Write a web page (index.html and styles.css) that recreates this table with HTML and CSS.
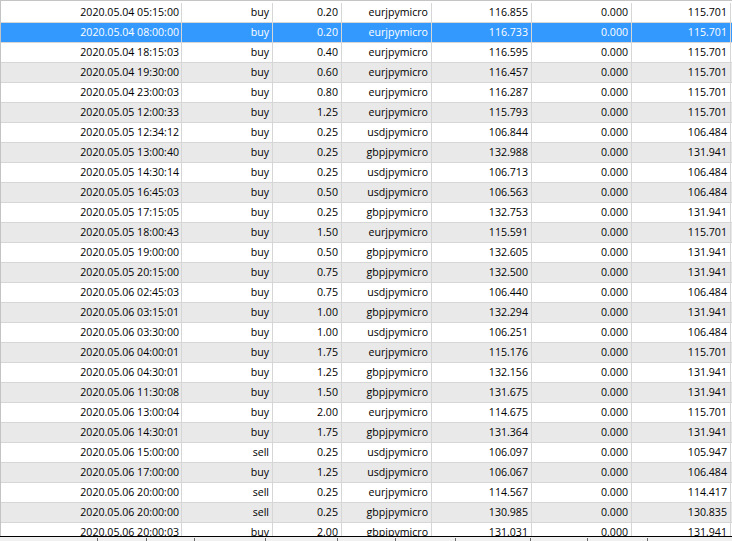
FILE: index.html
```html
<!DOCTYPE html>
<html>
<head>
<meta charset="utf-8">
<link rel="stylesheet" href="styles.css">
</head>
<body>
<div class="view">
  <div class="grid">
    <div class="row"><span>2020.05.04 05:15:00</span><span>buy</span><span>0.20</span><span>eurjpymicro</span><span>116.855</span><span>0.000</span><span>115.701</span></div>
    <div class="row sel"><span>2020.05.04 08:00:00</span><span>buy</span><span>0.20</span><span>eurjpymicro</span><span>116.733</span><span>0.000</span><span>115.701</span></div>
    <div class="row"><span>2020.05.04 18:15:03</span><span>buy</span><span>0.40</span><span>eurjpymicro</span><span>116.595</span><span>0.000</span><span>115.701</span></div>
    <div class="row alt"><span>2020.05.04 19:30:00</span><span>buy</span><span>0.60</span><span>eurjpymicro</span><span>116.457</span><span>0.000</span><span>115.701</span></div>
    <div class="row"><span>2020.05.04 23:00:03</span><span>buy</span><span>0.80</span><span>eurjpymicro</span><span>116.287</span><span>0.000</span><span>115.701</span></div>
    <div class="row alt"><span>2020.05.05 12:00:33</span><span>buy</span><span>1.25</span><span>eurjpymicro</span><span>115.793</span><span>0.000</span><span>115.701</span></div>
    <div class="row"><span>2020.05.05 12:34:12</span><span>buy</span><span>0.25</span><span>usdjpymicro</span><span>106.844</span><span>0.000</span><span>106.484</span></div>
    <div class="row alt"><span>2020.05.05 13:00:40</span><span>buy</span><span>0.25</span><span>gbpjpymicro</span><span>132.988</span><span>0.000</span><span>131.941</span></div>
    <div class="row"><span>2020.05.05 14:30:14</span><span>buy</span><span>0.25</span><span>usdjpymicro</span><span>106.713</span><span>0.000</span><span>106.484</span></div>
    <div class="row alt"><span>2020.05.05 16:45:03</span><span>buy</span><span>0.50</span><span>usdjpymicro</span><span>106.563</span><span>0.000</span><span>106.484</span></div>
    <div class="row"><span>2020.05.05 17:15:05</span><span>buy</span><span>0.25</span><span>gbpjpymicro</span><span>132.753</span><span>0.000</span><span>131.941</span></div>
    <div class="row alt"><span>2020.05.05 18:00:43</span><span>buy</span><span>1.50</span><span>eurjpymicro</span><span>115.591</span><span>0.000</span><span>115.701</span></div>
    <div class="row"><span>2020.05.05 19:00:00</span><span>buy</span><span>0.50</span><span>gbpjpymicro</span><span>132.605</span><span>0.000</span><span>131.941</span></div>
    <div class="row alt"><span>2020.05.05 20:15:00</span><span>buy</span><span>0.75</span><span>gbpjpymicro</span><span>132.500</span><span>0.000</span><span>131.941</span></div>
    <div class="row"><span>2020.05.06 02:45:03</span><span>buy</span><span>0.75</span><span>usdjpymicro</span><span>106.440</span><span>0.000</span><span>106.484</span></div>
    <div class="row alt"><span>2020.05.06 03:15:01</span><span>buy</span><span>1.00</span><span>gbpjpymicro</span><span>132.294</span><span>0.000</span><span>131.941</span></div>
    <div class="row"><span>2020.05.06 03:30:00</span><span>buy</span><span>1.00</span><span>usdjpymicro</span><span>106.251</span><span>0.000</span><span>106.484</span></div>
    <div class="row alt"><span>2020.05.06 04:00:01</span><span>buy</span><span>1.75</span><span>eurjpymicro</span><span>115.176</span><span>0.000</span><span>115.701</span></div>
    <div class="row"><span>2020.05.06 04:30:01</span><span>buy</span><span>1.25</span><span>gbpjpymicro</span><span>132.156</span><span>0.000</span><span>131.941</span></div>
    <div class="row alt"><span>2020.05.06 11:30:08</span><span>buy</span><span>1.50</span><span>gbpjpymicro</span><span>131.675</span><span>0.000</span><span>131.941</span></div>
    <div class="row"><span>2020.05.06 13:00:04</span><span>buy</span><span>2.00</span><span>eurjpymicro</span><span>114.675</span><span>0.000</span><span>115.701</span></div>
    <div class="row alt"><span>2020.05.06 14:30:01</span><span>buy</span><span>1.75</span><span>gbpjpymicro</span><span>131.364</span><span>0.000</span><span>131.941</span></div>
    <div class="row"><span>2020.05.06 15:00:00</span><span>sell</span><span>0.25</span><span>usdjpymicro</span><span>106.097</span><span>0.000</span><span>105.947</span></div>
    <div class="row alt"><span>2020.05.06 17:00:00</span><span>buy</span><span>1.25</span><span>usdjpymicro</span><span>106.067</span><span>0.000</span><span>106.484</span></div>
    <div class="row"><span>2020.05.06 20:00:00</span><span>sell</span><span>0.25</span><span>eurjpymicro</span><span>114.567</span><span>0.000</span><span>114.417</span></div>
    <div class="row alt"><span>2020.05.06 20:00:00</span><span>sell</span><span>0.25</span><span>gbpjpymicro</span><span>130.985</span><span>0.000</span><span>130.835</span></div>
    <div class="row"><span>2020.05.06 20:00:03</span><span>buy</span><span>2.00</span><span>gbpjpymicro</span><span>131.031</span><span>0.000</span><span>131.941</span></div>
  </div>
</div>
<div class="divider"></div>
<div class="strip">
  <i class="t1"></i><i class="t2"></i><i class="t3"></i><i class="t4"></i><i class="t5"></i><i class="t6"></i><i class="t7"></i><i class="t8"></i><i class="t9"></i><i class="t10"></i>
</div>
</body>
</html>
```

FILE: styles.css
```css
html, body {
  margin: 0;
  padding: 0;
  background: #ffffff;
  width: 732px;
  height: 541px;
  overflow: hidden;
}

body {
  font-family: "Open Sans", "Noto Sans", sans-serif;
  font-size: 10.6px;
  color: #000000;
}

.view {
  overflow: hidden;
  border-top: 1px solid #c4c4c4;
  border-left: 1px solid #c4c4c4;
  box-sizing: border-box;
  height: 536px;
  padding-top: 2px;
}

.grid {
  display: flex;
  flex-direction: column;
}

.row {
  display: grid;
  grid-template-columns: 181px 91px 69px 90px 100px 100px 99px;
  height: 20px;
  box-sizing: border-box;
  border-bottom: 1px solid #d6d6d6;
  background: #ffffff;
}

.row.alt {
  background: #e9e9e9;
}

.row.sel {
  background: #3399ff;
  color: #ffffff;
}

.row span {
  display: block;
  text-align: right;
  padding-right: 3px;
  line-height: 19px;
  border-right: 1px solid #d6d6d6;
  white-space: nowrap;
  overflow: hidden;
}

.row span:first-child {
  padding-right: 2px;
}

.divider {
  height: 1px;
  background: #000000;
}

.strip {
  height: 4px;
  background: #f0f0f0;
  display: flex;
  align-items: flex-end;
}

.strip i {
  display: block;
  height: 3px;
  box-sizing: border-box;
  border-right: 1px solid #6a6a6a;
}

.strip .t1 { width: 98px; }
.strip .t2 { width: 49px; }
.strip .t3 { width: 48px; }
.strip .t4 { width: 71px; }
.strip .t5 { width: 72px; }
.strip .t6 { width: 58px; }
.strip .t7 { width: 60px; }
.strip .t8 { width: 75px; }
.strip .t9 { width: 57px; }
.strip .t10 { width: 60px; }
```
